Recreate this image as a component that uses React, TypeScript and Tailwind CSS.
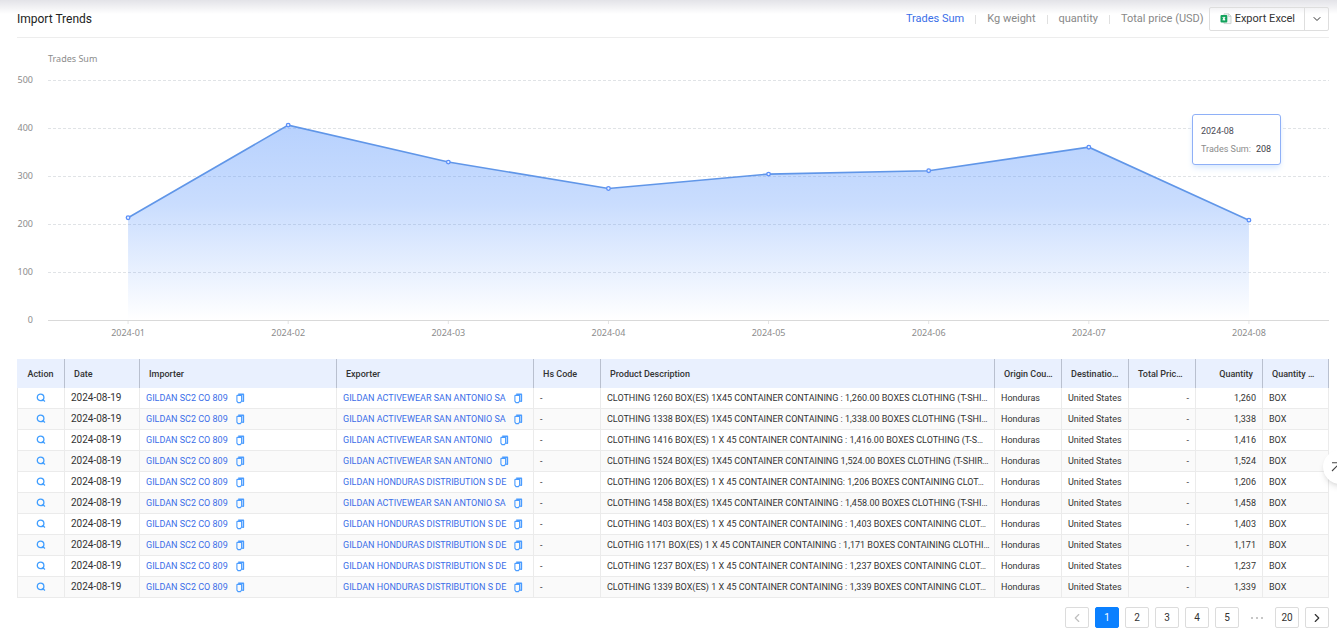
import { useState } from 'react';
import { ChevronDown, ChevronLeft, ChevronRight } from 'lucide-react';

interface Shipment {
  exporter: string;
  description: string;
  quantity: string;
}

const metrics = ['Trades Sum', 'Kg weight', 'quantity', 'Total price (USD)'];

const trend = [
  { month: '2024-01', value: 213 },
  { month: '2024-02', value: 406 },
  { month: '2024-03', value: 329 },
  { month: '2024-04', value: 274 },
  { month: '2024-05', value: 304 },
  { month: '2024-06', value: 311 },
  { month: '2024-07', value: 360 },
  { month: '2024-08', value: 208 },
];

const ticks = [500, 400, 300, 200, 100, 0];

const columns = [
  { label: 'Action', width: 'w-[48px]', align: 'text-center' },
  { label: 'Date', width: 'w-[75px]', align: 'text-left' },
  { label: 'Importer', width: 'w-[197px]', align: 'text-left' },
  { label: 'Exporter', width: 'w-[197px]', align: 'text-left' },
  { label: 'Hs Code', width: 'w-[67px]', align: 'text-left' },
  { label: 'Product Description', width: '', align: 'text-left' },
  { label: 'Origin Cou…', width: 'w-[67px]', align: 'text-left' },
  { label: 'Destinatio…', width: 'w-[67px]', align: 'text-left' },
  { label: 'Total Pric…', width: 'w-[67px]', align: 'text-left' },
  { label: 'Quantity', width: 'w-[67px]', align: 'text-right' },
  { label: 'Quantity …', width: 'w-[66px]', align: 'text-left' },
];

const shipments: Shipment[] = [
  {
    exporter: 'GILDAN ACTIVEWEAR SAN ANTONIO SA',
    description: 'CLOTHING 1260 BOX(ES) 1X45 CONTAINER CONTAINING : 1,260.00 BOXES CLOTHING (T-SHI…',
    quantity: '1,260',
  },
  {
    exporter: 'GILDAN ACTIVEWEAR SAN ANTONIO SA',
    description: 'CLOTHING 1338 BOX(ES) 1X45 CONTAINER CONTAINING : 1,338.00 BOXES CLOTHING (T-SHI…',
    quantity: '1,338',
  },
  {
    exporter: 'GILDAN ACTIVEWEAR SAN ANTONIO',
    description: 'CLOTHING 1416 BOX(ES) 1 X 45 CONTAINER CONTAINING : 1,416.00 BOXES CLOTHING (T-S…',
    quantity: '1,416',
  },
  {
    exporter: 'GILDAN ACTIVEWEAR SAN ANTONIO',
    description: 'CLOTHING 1524 BOX(ES) 1X45 CONTAINER CONTAINING 1,524.00 BOXES CLOTHING (T-SHIR…',
    quantity: '1,524',
  },
  {
    exporter: 'GILDAN HONDURAS DISTRIBUTION S DE',
    description: 'CLOTHING 1206 BOX(ES) 1 X 45 CONTAINER CONTAINING: 1,206 BOXES CONTAINING CLOT…',
    quantity: '1,206',
  },
  {
    exporter: 'GILDAN ACTIVEWEAR SAN ANTONIO SA',
    description: 'CLOTHING 1458 BOX(ES) 1X45 CONTAINER CONTAINING : 1,458.00 BOXES CLOTHING (T-SHI…',
    quantity: '1,458',
  },
  {
    exporter: 'GILDAN HONDURAS DISTRIBUTION S DE',
    description: 'CLOTHING 1403 BOX(ES) 1 X 45 CONTAINER CONTAINING : 1,403 BOXES CONTAINING CLOT…',
    quantity: '1,403',
  },
  {
    exporter: 'GILDAN HONDURAS DISTRIBUTION S DE',
    description: 'CLOTHIG 1171 BOX(ES) 1 X 45 CONTAINER CONTAINING : 1,171 BOXES CONTAINING CLOTHI…',
    quantity: '1,171',
  },
  {
    exporter: 'GILDAN HONDURAS DISTRIBUTION S DE',
    description: 'CLOTHING 1237 BOX(ES) 1 X 45 CONTAINER CONTAINING : 1,237 BOXES CONTAINING CLOT…',
    quantity: '1,237',
  },
  {
    exporter: 'GILDAN HONDURAS DISTRIBUTION S DE',
    description: 'CLOTHING 1339 BOX(ES) 1 X 45 CONTAINER CONTAINING : 1,339 BOXES CONTAINING CLOT…',
    quantity: '1,339',
  },
];

function SearchIcon() {
  return (
    <svg viewBox="0 0 10 10" className="w-[10px] h-[10px]" fill="none" stroke="#409eff" strokeWidth="1.3">
      <circle cx="4.6" cy="4.4" r="3.3" />
      <path d="M6.6 6.6 9 8.4" />
    </svg>
  );
}

function CopyIcon() {
  return (
    <svg viewBox="0 0 9 11" className="w-[9px] h-[11px]" fill="none" stroke="#4a9cff" strokeLinejoin="round">
      <path d="M1.4 2.4h4.2v5.8L4.4 9.6H2L.9 8.2V3a.6.6 0 0 1 .5-.6z" strokeWidth="1.1" />
      <path d="M2.2 1.2h5.2v7H6.2" strokeWidth="1.5" />
    </svg>
  );
}

function ExcelIcon() {
  return (
    <svg viewBox="0 0 12 12" className="w-[12px] h-[12px]" fill="none">
      <path d="M4 .8h4.8L11 3v7.6H4z" fill="#f3f6f5" stroke="#c3cbc8" strokeWidth=".8" />
      <path d="M8.6 1v2.4H11" stroke="#c3cbc8" strokeWidth=".8" />
      <rect x=".5" y="2" width="6.8" height="7.4" rx="1" fill="#12a35c" />
      <path d="M2.8 4 5 7.4M5 4 2.8 7.4" stroke="#fff" strokeWidth="1.1" />
    </svg>
  );
}

function CompanyCell({ name }: { name: string }) {
  return (
    <div className="flex items-center gap-2">
      <a href="#company" className="text-[#3a6ee8] whitespace-nowrap">
        {name}
      </a>
      <button aria-label={`Copy ${name}`} className="shrink-0">
        <CopyIcon />
      </button>
    </div>
  );
}

function TrendChart() {
  const points = trend.map((d, i) => `${i * 100 + 50},${500 - d.value}`).join(' ');

  return (
    <div className="font-['Noto_Sans',sans-serif] text-[9px] leading-[12px] text-[#8c8c8c] pt-[15px]">
      <div className="pl-[31px]">Trades Sum</div>
      <div className="flex pt-[15px]">
        <div className="w-[31px] h-[240px] flex flex-col justify-between">
          {ticks.map((tick) => (
            <span key={tick} className="w-[16px] h-0 flex items-center justify-end">
              {tick}
            </span>
          ))}
        </div>
        <div className="relative flex-1">
          <svg className="block w-full h-[240px] overflow-visible">
            <defs>
              <linearGradient id="area" x1="0" y1="0" x2="0" y2="1">
                <stop offset="0" stopColor="#5c97fc" stopOpacity="0.44" />
                <stop offset="0.4" stopColor="#5c97fc" stopOpacity="0.33" />
                <stop offset="1" stopColor="#5c97fc" stopOpacity="0" />
              </linearGradient>
            </defs>
            {ticks.map((tick) => (
              <line
                key={tick}
                x1="0"
                x2="100%"
                y1={`${100 - tick / 5}%`}
                y2={`${100 - tick / 5}%`}
                transform="translate(0 0.5)"
                stroke={tick === 0 ? '#d9d9d9' : '#e0e3e6'}
                strokeDasharray={tick === 0 ? undefined : '3 2'}
              />
            ))}
            <svg viewBox="0 0 800 500" preserveAspectRatio="none" width="100%" height="240">
              <polygon points={`50,500 ${points} 750,500`} fill="url(#area)" />
              <polyline
                points={points}
                fill="none"
                stroke="#6096e8"
                strokeWidth="1.6"
                vectorEffect="non-scaling-stroke"
              />
            </svg>
            {trend.map((d, i) => (
              <g key={d.month}>
                <line
                  x1={`${(i + 0.5) * 12.5}%`}
                  x2={`${(i + 0.5) * 12.5}%`}
                  y1="241"
                  y2="244"
                  stroke="#e3e3e3"
                />
                <circle
                  cx={`${(i + 0.5) * 12.5}%`}
                  cy={`${100 - d.value / 5}%`}
                  r="1.8"
                  fill="#e8f0ff"
                  stroke="#5b8ff9"
                  strokeWidth="1.3"
                />
              </g>
            ))}
          </svg>
          <div className="grid grid-cols-8 pt-[7px] text-center">
            {trend.map((d) => (
              <span key={d.month}>{d.month}</span>
            ))}
          </div>
          <div className="absolute top-[34px] right-[48px] w-[89px] h-[51px] pl-2 flex flex-col justify-center gap-[6px] bg-white border border-[#8fb0f7] rounded-[3px] shadow-md shadow-blue-100 font-[Roboto,sans-serif]">
            <div className="text-[#4a4a55]">2024-08</div>
            <div className="flex gap-[5px] whitespace-nowrap">
              <span>Trades Sum:</span>
              <span className="text-[#3c3c46]">208</span>
            </div>
          </div>
        </div>
      </div>
    </div>
  );
}

function ShipmentTable() {
  const cell = 'h-[21px] px-[6px] border-r border-b border-[#ebebeb]';

  return (
    <table className="mt-[20px] w-full table-fixed border-separate border-spacing-0 text-[9px] leading-[14px] text-[#333]">
      <thead>
        <tr className="bg-[#e9f0fe]">
          {columns.map((col) => (
            <th
              key={col.label}
              className={`${col.width} ${col.align} h-[29px] px-[9px] first:px-0 whitespace-nowrap font-medium border-r border-[#b9c0cf]`}
            >
              {col.label}
            </th>
          ))}
        </tr>
      </thead>
      <tbody>
        {shipments.map((row) => (
          <tr key={row.description} className="even:bg-[#fafafa]">
            <td className={`${cell} border-l`}>
              <button aria-label="View details" className="block mx-auto">
                <SearchIcon />
              </button>
            </td>
            <td className={`${cell} text-[10px]`}>2024-08-19</td>
            <td className={cell}>
              <CompanyCell name="GILDAN SC2 CO 809" />
            </td>
            <td className={cell}>
              <CompanyCell name={row.exporter} />
            </td>
            <td className={cell}>-</td>
            <td className="h-[21px] pl-[6px] border-r border-b border-[#ebebeb] truncate">{row.description}</td>
            <td className={cell}>Honduras</td>
            <td className={`${cell} whitespace-nowrap`}>United States</td>
            <td className={`${cell} text-right`}>-</td>
            <td className={`${cell} text-right`}>{row.quantity}</td>
            <td className={cell}>BOX</td>
          </tr>
        ))}
      </tbody>
    </table>
  );
}

function Pagination() {
  const [page, setPage] = useState(1);
  const button = 'w-[24px] h-[21px] flex items-center justify-center rounded-[2px] border';

  return (
    <nav aria-label="Pagination" className="flex justify-end gap-[6px] pt-[9px] text-[10px] text-[#333]">
      <button
        aria-label="Previous page"
        disabled={page === 1}
        onClick={() => setPage(page - 1)}
        className={`${button} border-[#dcdcdc] disabled:text-[#bfbfbf]`}
      >
        <ChevronLeft size={14} />
      </button>
      {[1, 2, 3, 4, 5].map((n) => (
        <button
          key={n}
          onClick={() => setPage(n)}
          className={`${button} ${n === page ? 'bg-[#0a80ff] border-[#0a80ff] text-white' : 'border-[#dcdcdc]'}`}
        >
          {n}
        </button>
      ))}
      <span className="w-[24px] h-[21px] flex items-center justify-center gap-[3px]">
        <i className="w-[2px] h-[2px] rounded-full bg-[#b5b5b5]" />
        <i className="w-[2px] h-[2px] rounded-full bg-[#b5b5b5]" />
        <i className="w-[2px] h-[2px] rounded-full bg-[#b5b5b5]" />
      </span>
      <button onClick={() => setPage(20)} className={`${button} border-[#dcdcdc]`}>
        20
      </button>
      <button aria-label="Next page" onClick={() => setPage(page + 1)} className={`${button} border-[#dcdcdc]`}>
        <ChevronRight size={14} />
      </button>
    </nav>
  );
}

function App() {
  const [metric, setMetric] = useState('Trades Sum');

  return (
    <div className="relative overflow-x-clip bg-white bg-linear-to-b from-[#e3e3e8] to-white bg-[length:100%_14px] bg-no-repeat pl-[17px] pr-[8px] pb-2 font-[Roboto,sans-serif]">
      <header className="flex items-center justify-between pt-[7px] pb-[6px] border-b border-[#ededed]">
        <h1 className="text-[12px] leading-[16px] text-[#222]">Import Trends</h1>
        <div className="flex items-center text-[11px] leading-[14px]">
          <div className="flex items-center divide-x divide-[#e0e0e0]">
            {metrics.map((name) => (
              <button
                key={name}
                onClick={() => setMetric(name)}
                className={`h-[9px] px-[11px] last:pr-[5px] flex items-center ${name === metric ? 'text-[#3a6ee8]' : 'text-[#888]'}`}
              >
                {name}
              </button>
            ))}
          </div>
          <div className="flex h-[24px] border border-[#dedede] rounded-[2px] text-[#333]">
            <button className="flex items-center gap-[3px] pl-[10px] pr-[9px] border-r border-[#dedede]">
              <ExcelIcon />
              Export Excel
            </button>
            <button aria-label="More export options" className="w-[23px] flex items-center justify-center">
              <ChevronDown size={12} />
            </button>
          </div>
        </div>
      </header>

      <TrendChart />
      <ShipmentTable />
      <Pagination />

      <button
        aria-label="Expand"
        className="absolute -right-[20px] top-[450px] w-[34px] h-[34px] rounded-full bg-white shadow-md pl-[8px]"
      >
        <svg viewBox="0 0 12 12" className="w-[12px] h-[12px]" fill="none" stroke="#444" strokeWidth="1.1">
          <path d="M1 1.8h8.5M9 2 1 10M9.5 1.8v7" />
        </svg>
      </button>
    </div>
  );
}

export default App;
